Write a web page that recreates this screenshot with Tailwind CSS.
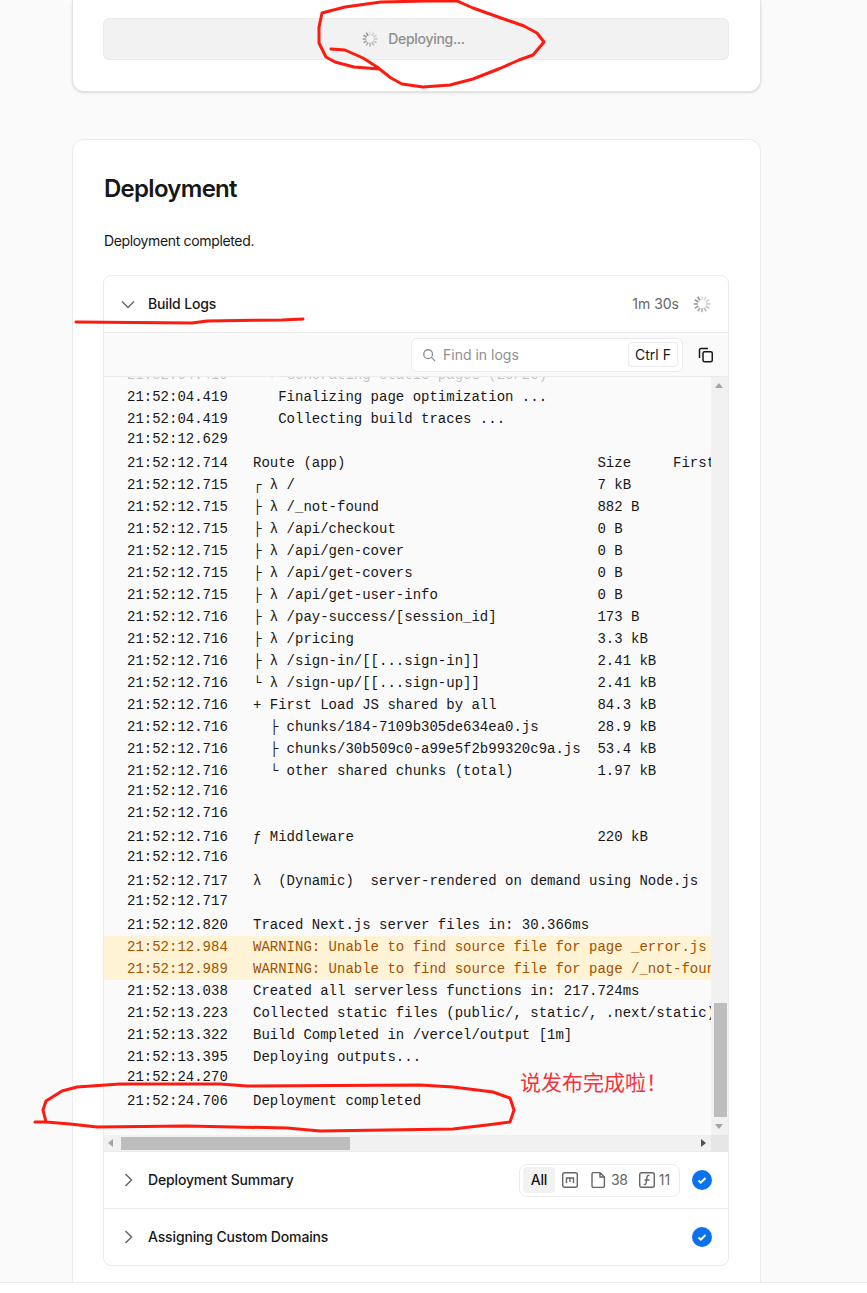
<!DOCTYPE html>
<html lang="en">
  <head>
    <meta charset="UTF-8" />
    <title>Deployment</title>
    <script src="https://cdn.jsdelivr.net/npm/@tailwindcss/browser@4"></script>
  </head>
  <body class="bg-white font-['Inter',sans-serif] text-[#171717]">
    <div class="relative h-[1293px] overflow-hidden">
      <main class="h-[1283px] overflow-hidden border-b border-[#ebebeb] bg-[#fafafa] pr-[106px] pl-[72px]">
        <!-- previous step, cut off by the top of the shot -->
        <section class="rounded-b-xl border-x border-b border-[#e3e3e3] bg-white pt-[18px] pr-[31px] pb-[31px] pl-[30px] shadow-sm">
          <div class="flex h-[42px] items-center justify-center gap-[9px] rounded-md border border-[#ebebeb] bg-[#f2f2f2] pr-[6px] text-sm font-medium tracking-[-0.3px] text-[#8f8f8f]">
            <span class="spinner block h-[18px] w-[18px]"></span>
            <span>Deploying...</span>
          </div>
        </section>

        <section class="mt-[47px] h-[1200px] rounded-t-xl border border-[#ebebeb] bg-white pt-[31px] pr-[31px] pl-[30px]">
          <h2 class="ml-px text-2xl leading-9 font-semibold tracking-[-0.03em]">Deployment</h2>
          <p class="mt-[24px] ml-px text-sm leading-5 tracking-[-0.35px] text-[#171717]">Deployment completed.</p>

          <div class="mt-[24px] overflow-hidden rounded-lg border border-[#ebebeb] bg-white">
            <div class="flex h-[57px] items-center border-b border-[#ebebeb] pr-[16px] pl-[16px]">
              <svg class="h-4 w-4 text-[#666]" viewBox="0 0 16 16" fill="none" stroke="currentColor" stroke-width="1.5"><path d="M2 5.500l6 6 6-6" /></svg>
              <span class="ml-[12px] text-sm font-medium tracking-[-0.15px]">Build Logs</span>
              <span class="ml-auto text-sm text-[#666]">1m 30s</span>
              <span class="spinner ml-[13px] block h-5 w-5"></span>
            </div>

            <div class="flex h-11 items-center justify-end border-b border-[#ebebeb] bg-[#fafafa] pr-[14px]">
              <div class="flex h-[34px] w-[272px] items-center rounded-md border border-[#ebebeb] bg-white pr-1 pl-[10px]">
                <svg class="h-[14px] w-[14px] text-[#8f8f8f]" viewBox="0 0 16 16" fill="none" stroke="currentColor" stroke-width="1.5"><circle cx="7" cy="7" r="5" /><path d="M11 11l4 4" /></svg>
                <span class="ml-[7px] text-sm text-[#8f8f8f]">Find in logs</span>
                <kbd class="ml-auto flex h-[25px] w-[50px] items-center justify-center rounded border border-[#ebebeb] bg-white font-['Inter',sans-serif] text-sm">Ctrl F</kbd>
              </div>
              <svg class="ml-[15px] h-4 w-4" viewBox="0 0 16 16" fill="none" stroke="#171717" stroke-width="1.5"><path d="M10 1.500H3A1.500 1.500 0 0 0 1.500 3v8" /><rect x="5" y="4.750" width="9.250" height="10" rx="1.500" /></svg>
            </div>

            <div class="flex h-[758px] bg-[#fafafa]">
              <div class="relative min-w-0 flex-1 overflow-hidden">
                <div id="log" class="-mt-[13px] font-['Liberation_Mono',monospace] text-sm whitespace-pre"></div>
              </div>
              <!-- vertical scrollbar -->
              <div class="relative w-[17px] bg-[#f1f1f1]">
                <span class="absolute top-[6px] left-[4px] h-0 w-0 border-x-[4px] border-b-[5px] border-x-transparent border-b-[#a3a3a3]"></span>
                <span class="absolute top-[626px] right-[1px] left-[3px] h-[114px] bg-[#bdbdbd]"></span>
                <span class="absolute bottom-[6px] left-[4px] h-0 w-0 border-x-[4px] border-t-[5px] border-x-transparent border-t-[#a3a3a3]"></span>
              </div>
            </div>
            <!-- horizontal scrollbar -->
            <div class="relative h-[17px] border-b border-[#ebebeb] bg-[#f1f1f1]">
              <span class="absolute top-[4px] left-[4px] h-0 w-0 border-y-[4px] border-r-[5px] border-y-transparent border-r-[#a3a3a3]"></span>
              <span class="absolute top-[2px] left-[17px] h-[13px] w-[229px] bg-[#bdbdbd]"></span>
              <span class="absolute top-[4px] left-[597px] h-0 w-0 border-y-[4px] border-l-[5px] border-y-transparent border-l-[#525252]"></span>
              <span class="absolute top-0 right-0 h-[17px] w-[17px] bg-[#e6e6e6]"></span>
            </div>

            <div class="flex h-[57px] items-center border-b border-[#ebebeb] pr-[16px] pl-[16px]">
              <svg class="h-4 w-4 text-[#666]" viewBox="0 0 16 16" fill="none" stroke="currentColor" stroke-width="1.5"><path d="M5.500 2l6 6-6 6" /></svg>
              <span class="ml-[12px] text-sm font-medium tracking-[-0.15px]">Deployment Summary</span>
              <div class="ml-auto flex h-[33px] w-[161px] items-center rounded-lg border border-[#ebebeb] bg-white pl-[3px] text-sm text-[#666]">
                <span class="flex h-[26px] w-[32px] items-center justify-center rounded bg-[#f2f2f2] font-medium tracking-[-0.2px] text-[#171717]">All</span>
                <svg class="ml-[7px] h-4 w-4" viewBox="0 0 16 16" fill="none" stroke="#666" stroke-width="1.4"><rect x="0.700" y="0.700" width="14.600" height="14.600" rx="2" /><path d="M4.500 11V6h7v5M8 6v4" /></svg>
                <svg class="ml-[12px] h-4 w-4" viewBox="0 0 16 16" fill="none" stroke="#666" stroke-width="1.4"><path d="M2 2a1.400 1.400 0 0 1 1.400-1.400H10L14.400 5v9a1.400 1.400 0 0 1-1.400 1.400H3.400A1.400 1.400 0 0 1 2 14zM10 .6V5h4.400" /></svg>
                <span class="ml-[5px] tracking-[-0.3px]">38</span>
                <svg class="ml-[11px] h-4 w-4" viewBox="0 0 16 16" fill="none" stroke="#666" stroke-width="1.4"><rect x="0.700" y="0.700" width="14.600" height="14.600" rx="2" /><path d="M10.500 3.500c-2-.5-2.300.5-2.500 2l-.8 5c-.2 1.500-.8 2.300-2.400 2M5.500 8h5" /></svg>
                <span class="ml-[4px]">11</span>
              </div>
              <svg class="ml-[12px] h-5 w-5" viewBox="0 0 20 20"><circle cx="10" cy="10" r="10" fill="#0a72ef" /><path d="M6.500 10.500l2.300 2.200L13.500 8" fill="none" stroke="#fff" stroke-width="2" /></svg>
            </div>

            <div class="flex h-[56px] items-center pr-[16px] pl-[16px]">
              <svg class="h-4 w-4 text-[#666]" viewBox="0 0 16 16" fill="none" stroke="currentColor" stroke-width="1.5"><path d="M5.500 2l6 6-6 6" /></svg>
              <span class="ml-[12px] text-sm font-medium tracking-[-0.15px]">Assigning Custom Domains</span>
              <svg class="ml-auto h-5 w-5" viewBox="0 0 20 20"><circle cx="10" cy="10" r="10" fill="#0a72ef" /><path d="M6.500 10.500l2.300 2.200L13.500 8" fill="none" stroke="#fff" stroke-width="2" /></svg>
            </div>
          </div>
        </section>
      </main>

      <!-- red marker scribbles drawn over the shot -->
      <svg class="pointer-events-none absolute inset-0 h-full w-full" viewBox="0 0 867 1293" fill="none" stroke="#fd1a10" stroke-width="3" stroke-linejoin="round" stroke-linecap="round">
        <path d="M331 49L345 50L363 58L377 67L391 78L402 84L423 87L450 85L473 79L501 68L519 60L533 55L544 42L537 33L524 26L501 18L473 8L457 1L427 1L381 2L345 7L322 13L319 27L319 43L326 57L335 62L354 67L379 69" />
        <path d="M76 322L192 323L207 321L282 320L303 319" />
        <path d="M35 1122L46 1122L43 1110L46 1101L62 1091L77 1087L120 1084L220 1084L247 1086L420 1085L453 1087L493 1092L510 1098L514 1110L510 1122L487 1125L453 1129L320 1131L287 1128L187 1126L97 1127L70 1124L46 1122" />
      </svg>
      <span class="absolute top-[1066px] left-[520px] font-['Noto_Sans_CJK_SC',sans-serif] text-[21px] leading-[30px] whitespace-nowrap text-[#f5333a]">说发布完成啦！</span>
    </div>

    <script>
      const logRows = [
        ["21:52:04.419", "  ✓ Generating static pages (20/20)", "faded"],
        ["21:52:04.419", "   Finalizing page optimization ..."],
        ["21:52:04.419", "   Collecting build traces ..."],
        ["21:52:12.629", ""],
        ["21:52:12.714", "Route (app)                              Size     First Load JS"],
        ["21:52:12.715", "┌ λ /                                    7 kB"],
        ["21:52:12.715", "├ λ /_not-found                          882 B"],
        ["21:52:12.715", "├ λ /api/checkout                        0 B"],
        ["21:52:12.715", "├ λ /api/gen-cover                       0 B"],
        ["21:52:12.715", "├ λ /api/get-covers                      0 B"],
        ["21:52:12.715", "├ λ /api/get-user-info                   0 B"],
        ["21:52:12.716", "├ λ /pay-success/[session_id]            173 B"],
        ["21:52:12.716", "├ λ /pricing                             3.3 kB"],
        ["21:52:12.716", "├ λ /sign-in/[[...sign-in]]              2.41 kB"],
        ["21:52:12.716", "└ λ /sign-up/[[...sign-up]]              2.41 kB"],
        ["21:52:12.716", "+ First Load JS shared by all            84.3 kB"],
        ["21:52:12.716", "  ├ chunks/184-7109b305de634ea0.js       28.9 kB"],
        ["21:52:12.716", "  ├ chunks/30b509c0-a99e5f2b99320c9a.js  53.4 kB"],
        ["21:52:12.716", "  └ other shared chunks (total)          1.97 kB"],
        ["21:52:12.716", ""],
        ["21:52:12.716", ""],
        ["21:52:12.716", "ƒ Middleware                             220 kB"],
        ["21:52:12.716", ""],
        ["21:52:12.717", "λ  (Dynamic)  server-rendered on demand using Node.js"],
        ["21:52:12.717", ""],
        ["21:52:12.820", "Traced Next.js server files in: 30.366ms"],
        ["21:52:12.984", "WARNING: Unable to find source file for page _error.js", "warn"],
        ["21:52:12.989", "WARNING: Unable to find source file for page /_not-found", "warn"],
        ["21:52:13.038", "Created all serverless functions in: 217.724ms"],
        ["21:52:13.223", "Collected static files (public/, static/, .next/static): 4.543ms"],
        ["21:52:13.322", "Build Completed in /vercel/output [1m]"],
        ["21:52:13.395", "Deploying outputs..."],
        ["21:52:24.270", ""],
        ["21:52:24.706", "Deployment completed"],
      ];

      const rowClasses = {
        plain: "text-[#171717]",
        faded: "text-[#171717]/25",
        warn: "bg-[#fff3d6] text-[#a35200]",
      };

      document.getElementById("log").innerHTML = logRows
        .map(([time, text, kind]) => {
          // rows with no message sit 2px higher in the real log
          const align = text ? "items-center leading-[22px]" : "items-start leading-[18px]";
          return `<div class="flex h-[22px] pl-[23px] ${align} ${rowClasses[kind || "plain"]}">
            <span class="w-[126px] shrink-0">${time}</span><span>${text}</span>
          </div>`;
        })
        .join("");

      const spokes = Array.from({ length: 12 }, (_, i) => {
        const opacity = (0.25 + (i / 11) * 0.75).toFixed(2);
        return `<line x1="12" y1="2" x2="12" y2="7" transform="rotate(${i * 30} 12 12)" opacity="${opacity}" />`;
      }).join("");

      document.querySelectorAll(".spinner").forEach((el) => {
        el.innerHTML = `<svg class="h-full w-full" viewBox="0 0 24 24" stroke="#8f8f8f" stroke-width="2">${spokes}</svg>`;
      });
    </script>
  </body>
</html>
